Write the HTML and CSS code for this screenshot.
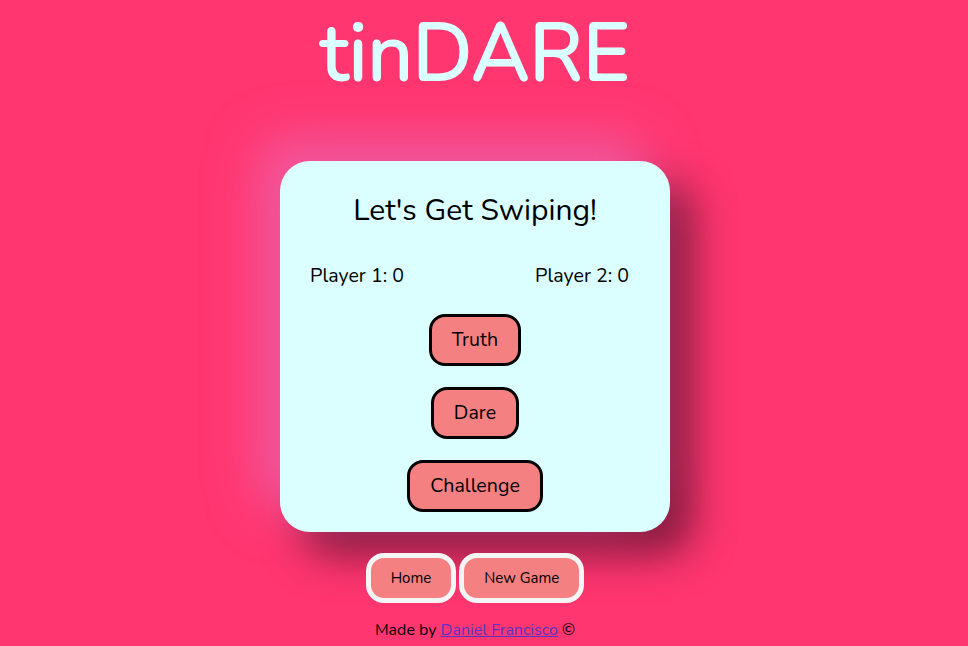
FILE: index.html
```html
<!DOCTYPE html>
<html lang="en">
<head>
<meta charset="utf-8">
<title>tinDARE</title>
<link rel="stylesheet" href="styles.css">
</head>
<body>
<div class="page">
  <h1 class="logo">tinDARE</h1>
  <main class="card">
    <h2 class="card-title">Let's Get Swiping!</h2>
    <div class="scores">
      <span class="score">Player 1: 0</span>
      <span class="score">Player 2: 0</span>
    </div>
    <div class="choices">
      <button class="choice">Truth</button>
      <button class="choice">Dare</button>
      <button class="choice">Challenge</button>
    </div>
  </main>
  <nav class="nav">
    <button class="nav-btn">Home</button>
    <button class="nav-btn">New Game</button>
  </nav>
  <footer class="footer">Made by <a href="#" class="link">Daniel Francisco</a> ©</footer>
</div>
</body>
</html>
```

FILE: styles.css
```css
html, body {
  margin: 0;
  padding: 0;
  background: #ff3670;
  overflow: hidden;
}
body {
  font-family: "Nunito", "Lato", "Noto Sans", sans-serif;
  color: #000;
}
.page {
  width: 950px;
  display: flex;
  flex-direction: column;
  align-items: center;
}
.logo {
  margin: -2px 0 0;
  padding: 0;
  font-size: 80px;
  line-height: 112px;
  font-weight: 400;
  color: #dbffff;
  -webkit-text-stroke: 1.8px #dbffff;
}
.card {
  margin-top: 51px;
  width: 390px;
  height: 371px;
  box-sizing: border-box;
  background: #dbfeff;
  border-radius: 30px;
  box-shadow: -22px -22px 50px #f25aa0, 22px 22px 42px #7e1a3c;
  display: flex;
  flex-direction: column;
  align-items: center;
  padding: 32px 30px 0;
}
.card > * {
  flex-shrink: 0;
}
.card-title {
  margin: 0;
  font-size: 30px;
  line-height: 36px;
  font-weight: 400;
}
.scores {
  margin-top: 35px;
  width: 100%;
  display: flex;
  justify-content: space-between;
  padding-right: 11px;
  box-sizing: border-box;
  font-size: 19.6px;
  line-height: 24px;
}
.choices {
  margin-top: 26px;
  display: flex;
  flex-direction: column;
  align-items: center;
  gap: 21px;
}
.choice {
  flex-shrink: 0;
  box-sizing: border-box;
  font-family: inherit;
  font-size: 19.6px;
  line-height: 24px;
  height: 52px;
  padding: 0 20px;
  background: #f58082;
  border: 3px solid #000;
  border-radius: 16px;
  color: #000;
}
.nav {
  margin-top: 21px;
  display: flex;
  gap: 3px;
}
.nav-btn {
  font-family: inherit;
  font-size: 15px;
  height: 50px;
  padding: 0 20px;
  background: #f58082;
  border: 5px solid #f5f5f5;
  border-radius: 18px;
  color: #000;
}
.footer {
  margin-top: 16px;
  font-size: 16px;
  line-height: 22px;
}
.link {
  color: #5b33c4;
}
```
